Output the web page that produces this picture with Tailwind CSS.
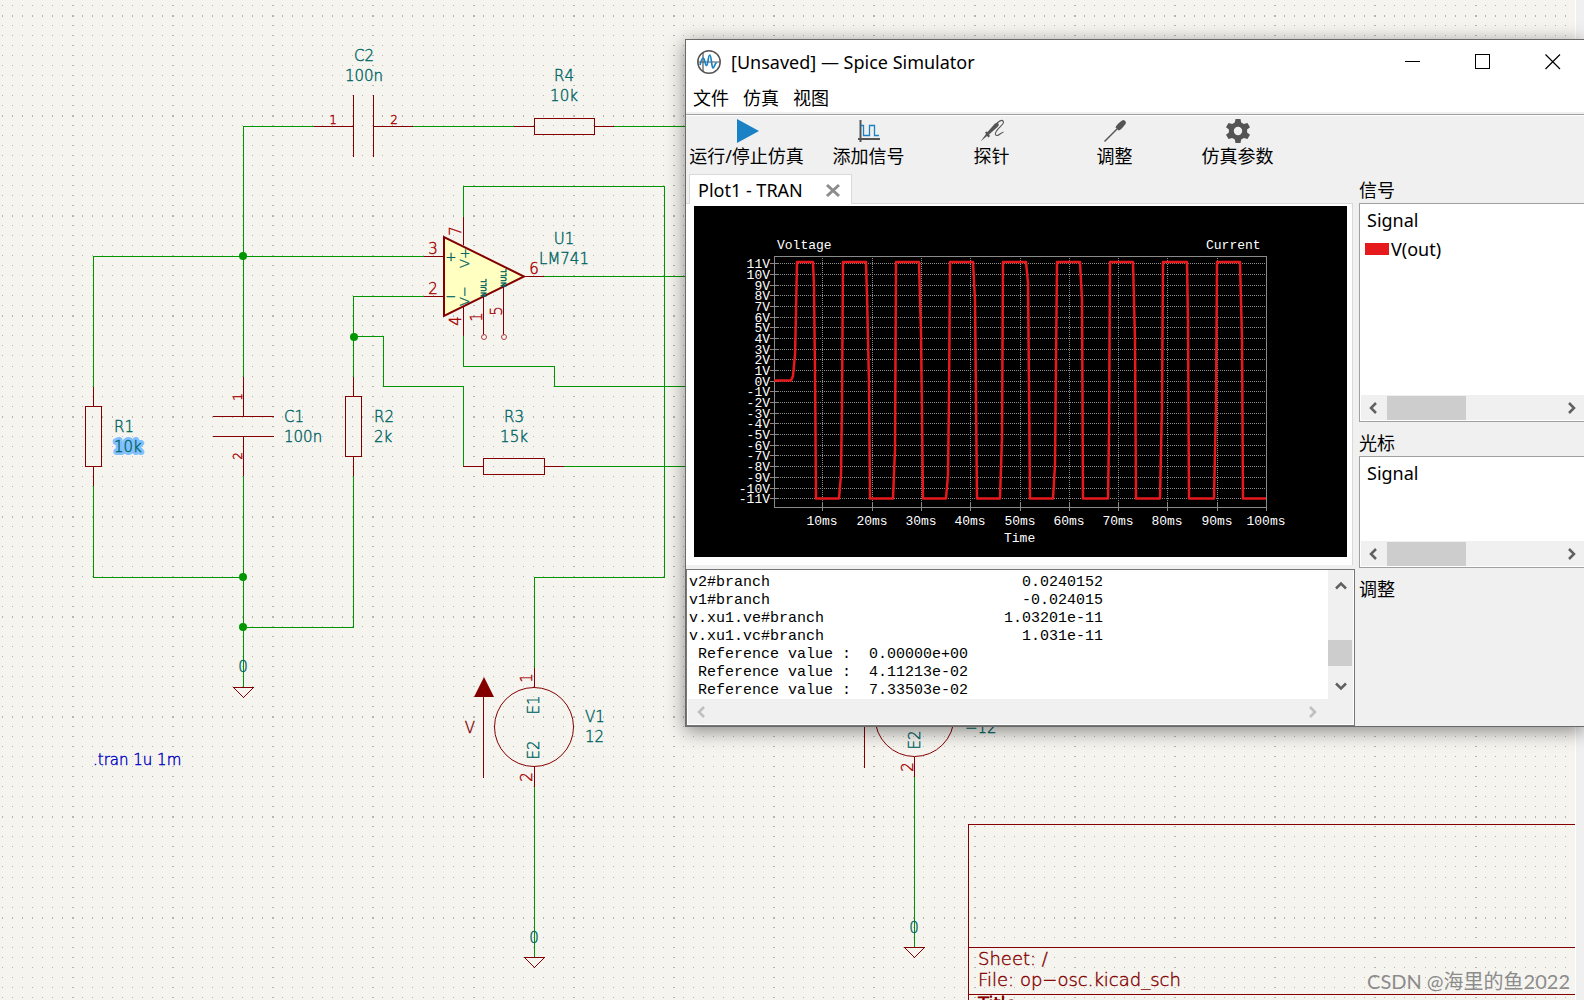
<!DOCTYPE html>
<html lang="zh-CN">
<head>
<meta charset="utf-8">
<meta name="viewport" content="width=device-width, initial-scale=1">
<title>Spice Simulator</title>
<script src="https://cdn.jsdelivr.net/npm/@tailwindcss/browser@4"></script>
</head>
<body class="flex h-screen overflow-hidden bg-[#f0f0f0] font-['Noto_Sans','Noto_Sans_CJK_SC',sans-serif] text-black">

<!-- Schematic sheet -->
<main class="relative min-w-0 flex-1 overflow-hidden border-r border-white bg-[#f5f4ef]">
  <svg class="absolute inset-0 h-full w-full font-['DejaVu_Sans_Light','DejaVu_Sans',sans-serif] text-[15px] font-extralight" role="img" aria-label="Schematic">
    <path id="grid" fill="#b4b4b2" shape-rendering="crispEdges"/>
    <!-- symbol body -->
    <path d="M444 237V316L524 276.500Z" fill="#ffffc2" stroke="#840000" stroke-width="2"/>
    <!-- wires -->
    <g fill="none" stroke="#009600" shape-rendering="crispEdges">
      <path d="M314 126.500H243.500V377M413 126.500H514M614 126.500H700M424 256.500H93.500V387M93.500 486V577.500H243.500M243.500 476V687M424 296.500H353.500V377M353.500 476V627.500H243.500M353.500 336.500H383.500V386.500H463.500V466M564 466.500H700M463.500 217V186.500H664.500V577.500H534.500V668M463.500 336V366.500H554.500V386.500H700M544 276.500H700M534.500 787V957M914.500 777V947"/>
    </g>
    <g fill="#009600">
      <circle cx="243" cy="256" r="4"/><circle cx="243" cy="577" r="4"/><circle cx="243" cy="627" r="4"/><circle cx="354" cy="337" r="4"/>
    </g>
    <!-- symbol outlines and pins -->
    <g fill="none" stroke="#840000" shape-rendering="crispEdges">
      <path d="M353.500 95V157M373.500 95V157M314 126.500H353M374 126.500H413M514 126.500H534M595 126.500H614M534.500 118.500H594.500V134.500H534.500Z"/>
      <path d="M424 256.500H444M424 296.500H444M524 276.500H544M463.500 217V245M463.500 307V336M483.500 297V334M503.500 287V334"/>
      <path d="M93.500 387V406M93.500 466V486M85.500 406.500H101.500V466.500H85.500ZM243.500 377V416M243.500 437V476M213 416.500H274M213 436.500H274M353.500 377V396M353.500 456V476M345.500 396.500H361.500V456.500H345.500Z"/>
      <path d="M463 466.500H483M545 466.500H564M483.500 458.500H544.500V474.500H483.500ZM233.500 687.500H253.500L243.500 697.500ZM524.500 957.500H544.500L534.500 967.500ZM904.500 947.500H924.500L914.500 957.500Z"/>
      <path d="M534.500 668V687M534.500 767V787M483.500 697V778M864.500 697V768M914.500 757V777"/>
      <path d="M1575 824.500H968.500V1000M968.500 947.500H1575M968.500 994.500H1575"/>
    </g>
    <g fill="none" stroke="#840000">
      <circle cx="534" cy="727" r="39.500"/><circle cx="914.500" cy="717" r="39.500"/>
      <g stroke="#b04040"><circle cx="484" cy="337" r="2.500"/><circle cx="504" cy="337" r="2.500"/></g>
    </g>
    <path d="M484 677L494 697H474Z" fill="#840000"/>
    <!-- reference designators and values -->
    <text x="114" y="452" fill="#80c0ff" stroke="#80c0ff" stroke-width="6" stroke-linejoin="round" aria-hidden="true">10k</text>
    <g fill="#006464" stroke="#006464" stroke-width=".4">
      <text x="284" y="422">C1</text><text x="284" y="442">100n</text>
      <text x="114" y="432">R1</text><text x="114" y="452">10k</text>
      <text x="374" y="422">R2</text><text x="374" y="442">2k</text>
      <text x="585" y="722">V1</text><text x="585" y="742">12</text>
      <text x="965" y="733">−12</text>
      <g text-anchor="middle">
        <text x="364" y="61">C2</text><text x="364" y="81">100n</text>
        <text x="564" y="81">R4</text><text x="564" y="101">10k</text>
        <text x="564" y="244">U1</text><text x="564" y="264">LM741</text>
        <text x="514" y="422">R3</text><text x="514" y="442">15k</text>
        <text x="243" y="672">0</text><text x="534" y="943">0</text><text x="914" y="933">0</text>
        <text transform="translate(539 705) rotate(-90)">E1</text>
        <text transform="translate(539 750) rotate(-90)">E2</text>
        <text transform="translate(920 740) rotate(-90)">E2</text>
        <g class="text-[13px]">
          <text x="451" y="261">+</text><text x="451" y="301">−</text>
          <text transform="translate(469 258) rotate(-90)">V+</text>
          <text transform="translate(469 296) rotate(-90)">V−</text>
        </g>
        <g class="text-[7px] font-bold">
          <text transform="translate(486 288) rotate(-90)">NULL</text>
          <text transform="translate(506 278) rotate(-90)">NULL</text>
        </g>
      </g>
    </g>
    <!-- pin numbers -->
    <g fill="#a90000" stroke="#a90000" stroke-width=".4" text-anchor="middle">
      <text x="433" y="254">3</text><text x="433" y="294">2</text><text x="534" y="274">6</text>
      <text transform="translate(461 231) rotate(-90)">7</text>
      <text transform="translate(461 321) rotate(-90)">4</text>
      <text transform="translate(482 317) rotate(-90)">1</text>
      <text transform="translate(502 311) rotate(-90)">5</text>
      <text transform="translate(532 678) rotate(-90)">1</text>
      <text transform="translate(532 777) rotate(-90)">2</text>
      <text transform="translate(913 767) rotate(-90)">2</text>
      <g class="text-xs">
        <text x="333" y="124">1</text><text x="394" y="124">2</text>
        <text transform="translate(242 397) rotate(-90)">1</text>
        <text transform="translate(242 456) rotate(-90)">2</text>
      </g>
    </g>
    <text x="470" y="733" fill="#840000" stroke="#840000" stroke-width=".4" text-anchor="middle">V</text>
    <text x="93" y="765" fill="#0000c2" stroke="#0000c2" stroke-width=".4">.tran 1u 1m</text>
    <!-- title block -->
    <g fill="#840000" stroke="#840000" stroke-width=".4" class="text-lg">
      <text x="978" y="965">Sheet: /</text>
      <text x="978" y="986">File: op−osc.kicad_sch</text>
      <text x="978" y="1010" class="font-bold">Title</text>
    </g>
  </svg>
</main>
<div class="w-2 shrink-0"></div>
<p class="absolute right-[14px] bottom-[5px] font-['Lato','Noto_Sans_CJK_SC',sans-serif] text-xl text-[#8c8c8c]">CSDN @海里的鱼2022</p>

<!-- Simulator window -->
<section class="absolute top-[39px] right-0 left-[685px] flex flex-col border-y border-l border-[#6a6a6a] bg-[#f0f0f0] text-lg leading-6 shadow-[0_4px_18px_rgba(0,0,0,0.45)]" aria-label="Spice Simulator">
  <header class="flex h-11 items-center bg-white pb-px pl-[11px]">
    <svg class="size-6 shrink-0" viewBox="0 0 24 24" fill="none">
      <circle cx="12" cy="12" r="11.200" stroke="#545454" stroke-width="1.500"/>
      <path d="M1 12H23M6 3V21" stroke="#545454" stroke-width="1.200"/>
      <path d="M3 15C4 11 5 8 6.200 8C8 8 8 15.500 9.500 15.500C11.200 15.500 11 5 12.800 5C14.500 5 14.500 18 16 18C17.200 18 17.500 14 19.500 12.500" stroke="#1a81c4" stroke-width="1.700"/>
    </svg>
    <h1 class="ml-[10px] text-lg">[Unsaved] — Spice Simulator</h1>
    <div class="ml-auto flex gap-2">
      <button class="flex h-11 w-[62px] items-center justify-center" aria-label="Minimize"><svg class="size-4" viewBox="0 0 16 16" stroke="#000" fill="none" shape-rendering="crispEdges"><path d="M0 7.500H15"/></svg></button>
      <button class="flex h-11 w-[62px] items-center justify-center" aria-label="Maximize"><svg class="size-4" viewBox="0 0 16 16" stroke="#000" fill="none" shape-rendering="crispEdges"><path d="M.5 .5H14.500V14.500H.5Z"/></svg></button>
      <button class="flex h-11 w-[62px] items-center justify-center" aria-label="Close"><svg class="size-4" viewBox="0 0 16 16" stroke="#000" stroke-width="1.200" fill="none"><path d="M.5 .5L15 15M15 .5L.5 15"/></svg></button>
    </div>
  </header>
  <nav class="flex h-7 items-center gap-[14px] bg-white pl-[7px]">
    <button>文件</button><button>仿真</button><button>视图</button>
  </nav>
  <div class="h-1 border-b border-white"><div class="mt-[2px] h-px bg-[#a0a0a0]"></div></div>

  <div class="flex h-14 pt-[3px]" role="toolbar">
    <button class="flex w-[121px] flex-col items-center gap-px whitespace-nowrap"><svg class="size-6" viewBox="0 0 24 24"><path d="M2 0L24 12L2 24Z" fill="#1a81c4"/></svg>运行/停止仿真</button>
    <button class="flex w-[123px] flex-col items-center gap-px"><svg class="size-6" viewBox="0 0 24 24" fill="none"><path d="M3.500 1V23M1 20H23" stroke="#545454" stroke-width="2"/><path d="M4 6.500H6.500V16.500H12.500V6.500H17.500V16.500H22" stroke="#1a81c4" stroke-width="1.300"/></svg>添加信号</button>
    <button class="flex w-[123px] flex-col items-center gap-px"><svg class="size-6" viewBox="0 0 24 24" fill="none"><path d="M.5 22.500L6 15L5 13.500L6.500 12.500L7.500 13L15 4.500Q17.500 3 18.500 4.500Q19.500 6 17.500 8L9 15.500L10 17L8.500 18.500L7 17Z" fill="#545454"/><path d="M17 4Q23 -1 23.500 3.500C23.500 6 14 12 15.500 15.500C17 18.500 20.500 14 23.500 13" stroke="#545454" stroke-width="1.100"/></svg>探针</button>
    <button class="flex w-[123px] flex-col items-center gap-px"><svg class="size-6" viewBox="0 0 24 24" fill="none"><path d="M1.500 22.500L14 10" stroke="#545454" stroke-width="1.400"/><path d="M12.500 8.500Q13 6 19 1.500L21 1L23 3L22.500 5Q18 11 15.500 11.500Z" fill="#545454"/></svg>调整</button>
    <button class="flex w-[123px] flex-col items-center gap-px"><svg class="size-6" viewBox="0 0 24 24"><path fill="#545454" fill-rule="evenodd" d="M9.500 0H14.500L15.200 3.600L17.800 5.100L21.500 3.900L24 8.200L21.100 10.500V13.500L24 15.800L21.500 20.100L17.800 18.900L15.200 20.400L14.500 24H9.500L8.800 20.400L6.200 18.900L2.500 20.100L0 15.800L2.900 13.500V10.500L0 8.200L2.500 3.900L6.200 5.100L8.800 3.600ZM12 7.800A4.200 4.200 0 1 0 12 16.200A4.200 4.200 0 1 0 12 7.800Z"/></svg>仿真参数</button>
  </div>

  <div class="flex">
    <!-- plot and log -->
    <div class="flex w-[669px] shrink-0 flex-col">
      <div class="flex h-[31px] items-end pl-[3px]" role="tablist">
        <button class="z-10 -mb-px flex h-[30px] w-[163px] items-center border border-b-0 border-[#d9d9d9] bg-white pl-2" role="tab" aria-selected="true">Plot1 - TRAN
          <svg class="ml-auto mr-[10px] size-4" viewBox="0 0 16 16" stroke="#8c8c8c" stroke-width="3"><path d="M2 3L14 14M14 3L2 14"/></svg>
        </button>
      </div>
      <div class="mr-[2px] border-t border-r border-[#d9d9d9] bg-white pt-[2px] pr-[5px] pb-2 pl-2">
        <svg id="plot" class="block h-[351px] w-full bg-black font-['Liberation_Mono',monospace] text-[13px]" viewBox="694 206 653 351" fill="#fff" role="img" aria-label="Transient plot">
          <g id="axes"></g>
          <path fill="none" stroke="#e6191c" stroke-width="2.500" stroke-linejoin="round" d="M774 380.500H791L793 376L795 355L796 312L797 262H813L814 287L815 370L816 498.500H839L841 475L842 403L843 262H866L867 296L869 383L870 498.500H893L895 450L896 262H919L921 333L922 416L923 498.500H946L948 475L949 396L950 262H973L975 300L976 400L977 498.500H1000L1002 437L1003 262H1026L1028 283L1029 390L1030 498.500H1053L1055 465L1057 262H1080L1082 300L1083 498.500H1108L1109 435L1110 262H1133L1135 340L1136 498.500H1160L1162 405L1163 262H1187L1188 323L1189 498.500H1214L1216 407L1217 262H1240L1242 340L1243 498.500H1266"/>
          <text x="777" y="249">Voltage</text><text x="1206" y="249">Current</text><text x="1004" y="542">Time</text>
        </svg>
      </div>
      <div class="mt-1 flex h-[157px] flex-col border border-[#767676] bg-white">
        <div class="flex min-h-0 flex-1 pr-px">
          <textarea class="min-w-0 flex-1 resize-none overflow-hidden bg-white pt-1 pl-[2px] font-['Liberation_Mono',monospace] text-[15px] leading-[18px] whitespace-pre outline-none" readonly aria-label="Simulation log">v2#branch                            0.0240152
v1#branch                            -0.024015
v.xu1.ve#branch                    1.03201e-11
v.xu1.vc#branch                      1.031e-11
 Reference value :  0.00000e+00
 Reference value :  4.11213e-02
 Reference value :  7.33503e-02</textarea>
          <div class="flex w-[25px] flex-col items-center bg-[#f0f0f0]">
            <button class="flex h-8 w-full items-center justify-center" aria-label="Scroll up"><svg class="size-3" viewBox="0 0 12 12" fill="none" stroke="#606060" stroke-width="2.500"><path d="M1 8.500L6 3.500L11 8.500"/></svg></button>
            <div class="mt-[38px] h-[26px] w-6 self-start bg-[#cdcdcd]"></div>
            <button class="mt-auto flex h-[26px] w-full items-center justify-center" aria-label="Scroll down"><svg class="size-3" viewBox="0 0 12 12" fill="none" stroke="#606060" stroke-width="2.500"><path d="M1 3.500L6 8.500L11 3.500"/></svg></button>
          </div>
        </div>
        <div class="mx-px mb-px flex h-[25px] items-center justify-between bg-[#f0f0f0] pr-[34px] pl-[7px]">
          <button aria-label="Scroll left"><svg class="block size-3" viewBox="0 0 12 12" fill="none" stroke="#bfbfbf" stroke-width="2.500"><path d="M9 1L4 6L9 11"/></svg></button>
          <button aria-label="Scroll right"><svg class="block size-3" viewBox="0 0 12 12" fill="none" stroke="#bfbfbf" stroke-width="2.500"><path d="M3 1L8 6L3 11"/></svg></button>
        </div>
      </div>
    </div>

    <!-- side panels -->
    <aside class="ml-1 flex min-w-0 flex-1 flex-col">
      <h2 class="mt-[6px]">信号</h2>
      <div class="mt-[1px] flex h-[219px] flex-col border border-r-0 border-[#a0a0a0] bg-white">
        <table class="w-full text-left">
          <thead><tr><th class="pt-1 pl-[7px] font-normal">Signal</th></tr></thead>
          <tbody><tr><td class="pt-[5px] pl-[5px]"><div class="flex items-center gap-[2px]"><span class="h-3 w-6 bg-[#e6191c]"></span>V(out)</div></td></tr></tbody>
        </table>
        <div class="mt-auto mb-px ml-px flex h-[25px] items-center bg-[#f0f0f0] pr-[6px] pl-[6px]">
          <button aria-label="Scroll left"><svg class="block size-3" viewBox="0 0 12 12" fill="none" stroke="#606060" stroke-width="2.500"><path d="M9 1L4 6L9 11"/></svg></button>
          <div class="ml-2 h-6 w-[79px] bg-[#cdcdcd]"></div>
          <button class="ml-auto" aria-label="Scroll right"><svg class="block size-3" viewBox="0 0 12 12" fill="none" stroke="#606060" stroke-width="2.500"><path d="M3 1L8 6L3 11"/></svg></button>
        </div>
      </div>
      <h2 class="mt-[9px]">光标</h2>
      <div class="mt-[1px] flex h-[112px] flex-col border border-r-0 border-[#a0a0a0] bg-white">
        <table class="w-full text-left">
          <thead><tr><th class="pt-1 pl-[7px] font-normal">Signal</th></tr></thead>
        </table>
        <div class="mt-auto mb-px ml-px flex h-[25px] items-center bg-[#f0f0f0] pr-[6px] pl-[6px]">
          <button aria-label="Scroll left"><svg class="block size-3" viewBox="0 0 12 12" fill="none" stroke="#606060" stroke-width="2.500"><path d="M9 1L4 6L9 11"/></svg></button>
          <div class="ml-2 h-6 w-[79px] bg-[#cdcdcd]"></div>
          <button class="ml-auto" aria-label="Scroll right"><svg class="block size-3" viewBox="0 0 12 12" fill="none" stroke="#606060" stroke-width="2.500"><path d="M3 1L8 6L3 11"/></svg></button>
        </div>
      </div>
      <h2 class="mt-[9px]">调整</h2>
    </aside>
  </div>
</section>

<script>
  // Sheet grid: one dot every 10 px, a heavier one on every tenth row and column
  let d = '';
  const step = 10.02;
  for (let j = -1; j < 200; j++) for (let i = -7; i < 300; i++) {
    const w = i % 10 === 0 ? 2 : 1, h = j % 10 === 0 ? 2 : 1;
    d += `M${Math.floor(72.3 + i * step)} ${Math.floor(15.3 + j * step)}h${w}v${h}h-${w}z`;
  }
  document.getElementById('grid').setAttribute('d', d);

  // Plot frame, dotted grid lines, ticks and tick labels
  let a = '<g fill="none" stroke="#8a8a8a" shape-rendering="crispEdges"><path d="M774.5 256.500H1266.500V507.500H774.500Z"/>';
  let labels = '';
  for (let v = -11; v <= 11; v++) {
    const y = Math.round(380.7 - v * 10.68);
    a += `<path d="M774 ${y + .5}H1266" stroke-dasharray="1 1"/><path d="M770 ${y + .5}H778"/>`;
    labels += `<text x="770" y="${y + 5}" text-anchor="end">${v}V</text>`;
  }
  for (let t = 1; t <= 10; t++) {
    const x = Math.round(773 + t * 49.3);
    a += `<path d="M${x + .5} 256V507" stroke-dasharray="1 1"/><path d="M${x + .5} 503V511"/>`;
    labels += `<text x="${x}" y="525" text-anchor="middle">${t * 10}ms</text>`;
  }
  document.getElementById('axes').innerHTML = a + '</g>' + labels;
</script>
</body>
</html>
